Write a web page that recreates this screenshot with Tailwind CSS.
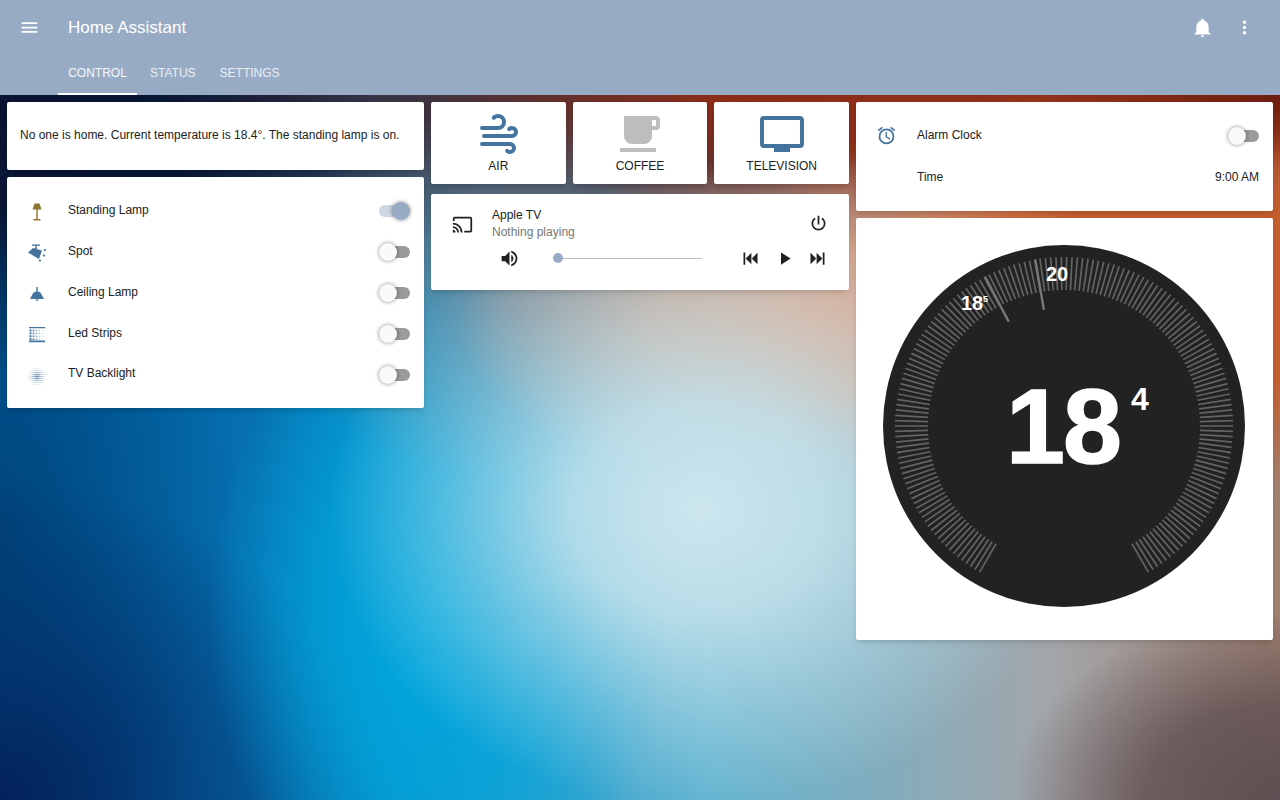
<!DOCTYPE html>
<html lang="en">
<head>
    <meta charset="UTF-8">
    <meta name="viewport" content="width=device-width, initial-scale=1.0">
    <title>Home Assistant</title>
    <script src="https://cdn.jsdelivr.net/npm/@tailwindcss/browser@4"></script>
</head>
<body class="h-[800px] overflow-hidden font-['Liberation_Sans',sans-serif] text-[#212121] text-[12px] bg-[#5b7f98] bg-[radial-gradient(ellipse_370px_300px_at_700px_510px,#cde6ee_0%,#c6e3ecdd_35%,#c0e0ea66_70%,#c0e0ea00_100%),radial-gradient(ellipse_350px_170px_at_810px_325px,#dfa98e_0%,#dfa98ecc_45%,#dfa98e00_100%),radial-gradient(ellipse_260px_70px_at_1280px_95px,#6c1d0f_0%,#6c1d0f00_100%),radial-gradient(ellipse_430px_210px_at_1150px_290px,#c75c2b_0%,#c75c2bee_50%,#c75c2b00_100%),radial-gradient(ellipse_620px_170px_at_1040px_70px,#8f2c15_0%,#8f2c15ee_55%,#8f2c1500_100%),radial-gradient(ellipse_270px_190px_at_1280px_800px,#5f4f52_0%,#5f4f52cc_50%,#5f4f5200_100%),radial-gradient(ellipse_260px_190px_at_520px_290px,#6d8fa3_0%,#6d8fa300_100%),radial-gradient(ellipse_440px_240px_at_600px_90px,#42303a_0%,#42303aee_40%,#42303a00_100%),radial-gradient(ellipse_620px_300px_at_0px_80px,#0a1230_0%,#0a1230ee_45%,#0a123000_100%),radial-gradient(ellipse_230px_340px_at_440px_610px,#00a8de_0%,#00a8dea0_55%,#00a8de00_100%),radial-gradient(ellipse_380px_320px_at_0px_800px,#04215a_0%,#04215a00_100%),radial-gradient(ellipse_240px_420px_at_0px_520px,#00457c_0%,#00457c00_100%),linear-gradient(90deg,#0064a4_0%,#0670b0_20%,#0a8fc8_32%,#5fb3d0_55%,#a3a6aa_82%,#a08070_100%)]">
    <!-- Toolbar -->
    <header class="h-[95px] bg-[#98abc5] text-white">
        <div class="h-[55px] flex items-center pl-[19px] pr-[25px]">
            <svg class="w-[21px] h-[21px] fill-white" viewBox="0 0 24 24"><path d="M3,6H21V8H3V6M3,11H21V13H3V11M3,16H21V18H3V16Z"/></svg>
            <div class="ml-[28px] text-[17px]">Home Assistant</div>
            <svg class="w-[21px] h-[21px] fill-white ml-auto" viewBox="0 0 24 24"><path d="M21,19V20H3V19L5,17V11C5,7.9 7.03,5.17 10,4.29C10,4.19 10,4.1 10,4A2,2 0 0,1 12,2A2,2 0 0,1 14,4C14,4.1 14,4.19 14,4.29C16.97,5.17 19,7.9 19,11V17L21,19M14,21A2,2 0 0,1 12,23A2,2 0 0,1 10,21"/></svg>
            <svg class="w-[21px] h-[21px] fill-white ml-[21px]" viewBox="0 0 24 24"><path d="M12,16A2,2 0 0,1 14,18A2,2 0 0,1 12,20A2,2 0 0,1 10,18A2,2 0 0,1 12,16M12,10A2,2 0 0,1 14,12A2,2 0 0,1 12,14A2,2 0 0,1 10,12A2,2 0 0,1 12,10M12,4A2,2 0 0,1 14,6A2,2 0 0,1 12,8A2,2 0 0,1 10,6A2,2 0 0,1 12,4Z"/></svg>
        </div>
        <nav class="h-[40px] flex pl-[58px] text-[12px]">
            <div class="w-[79px] flex items-center justify-center border-b-2 border-white pb-[2px] text-white/90">CONTROL</div>
            <div class="ml-[13px] flex items-center text-white/80 pb-[4px]">STATUS</div>
            <div class="ml-[24px] flex items-center text-white/80 pb-[4px]">SETTINGS</div>
        </nav>
    </header>

    <main class="flex gap-[7px] px-[7px] pt-[7px] items-start">
        <!-- Column 1 -->
        <section class="w-[417px] flex flex-col gap-[7px]">
            <div class="h-[68px] bg-white rounded-[2px] shadow-md flex items-center px-[13px] pb-[2px]">No one is home. Current temperature is 18.4°. The standing lamp is on.</div>
            <div class="bg-white rounded-[2px] shadow-md py-[13px] pl-[18px] pr-[14px]">
                <div class="h-[41px] flex items-center">
                    <svg class="w-6 h-6 mt-[3px] fill-[#8f7330]" viewBox="0 0 24 24"><path d="M9.5,3.5H14.5L16.5,9.5H7.5ZM11.3,9.5H12.7V19H11.3ZM8.5,19H15.5V20.6H8.5Z"/></svg>
                    <span class="ml-[19px] mb-[1px]">Standing Lamp</span>
                    <div class="ml-auto relative w-[31px] h-[12px] rounded-full bg-[#cdd6e3]"><div class="absolute right-0 -top-[3px] w-[18px] h-[18px] rounded-full bg-[#98abc5] shadow-[0_0_4px_#0007]"></div></div>
                </div>
                <div class="h-[41px] flex items-center">
                    <svg class="w-6 h-6 fill-[#44739e]" viewBox="0 0 24 24"><path d="M7,4.5H15V5.8H11.8V9H10.4V5.8H7ZM3,12.5L8,8L17,10.5L14,19ZM20,9a1,1 0 1,1 -0.1,0ZM19,14.5a1,1 0 1,1 -0.1,0ZM15,19.5a1,1 0 1,1 -0.1,0Z"/></svg>
                    <span class="ml-[19px] mb-[1px]">Spot</span>
                    <div class="ml-auto relative w-[31px] h-[12px] rounded-full bg-[#9b9b9b]"><div class="absolute left-0 -top-[3px] w-[18px] h-[18px] rounded-full bg-[#fafafa] shadow-[0_0_4px_#0007]"></div></div>
                </div>
                <div class="h-[41px] flex items-center">
                    <svg class="w-6 h-6 fill-[#44739e]" viewBox="0 0 24 24"><path d="M11.3,6H12.7V10.5C14.5,10.8 15.5,11.6 16.4,13L19,18H5L7.6,13C8.5,11.6 9.5,10.8 11.3,10.5ZM10,18.6H14L12,20.2Z"/></svg>
                    <span class="ml-[19px] mb-[1px]">Ceiling Lamp</span>
                    <div class="ml-auto relative w-[31px] h-[12px] rounded-full bg-[#9b9b9b]"><div class="absolute left-0 -top-[3px] w-[18px] h-[18px] rounded-full bg-[#fafafa] shadow-[0_0_4px_#0007]"></div></div>
                </div>
                <div class="h-[41px] flex items-center">
                    <svg class="w-6 h-6 fill-[#44739e]" viewBox="0 0 24 24">
                        <path d="M4,5H20V6.2H4ZM4,18.6H20V20.2H4Z"/>
                        <g id="led-dots"></g>
                    </svg>
                    <span class="ml-[19px] mb-[1px]">Led Strips</span>
                    <div class="ml-auto relative w-[31px] h-[12px] rounded-full bg-[#9b9b9b]"><div class="absolute left-0 -top-[3px] w-[18px] h-[18px] rounded-full bg-[#fafafa] shadow-[0_0_4px_#0007]"></div></div>
                </div>
                <div class="h-[41px] flex items-center">
                    <svg class="w-6 h-6 fill-[#44739e]" viewBox="0 0 24 24"><g id="tv-dots"></g></svg>
                    <span class="ml-[19px] mb-[3px]">TV Backlight</span>
                    <div class="ml-auto relative w-[31px] h-[12px] rounded-full bg-[#9b9b9b]"><div class="absolute left-0 -top-[3px] w-[18px] h-[18px] rounded-full bg-[#fafafa] shadow-[0_0_4px_#0007]"></div></div>
                </div>
            </div>
        </section>

        <!-- Column 2 -->
        <section class="w-[418px] flex flex-col gap-[10px]">
            <div class="flex gap-[7px]">
                <div class="flex-1 h-[82px] bg-white rounded-[2px] shadow-md flex flex-col items-center pt-[8px]">
                    <svg class="w-12 h-12 fill-[#44739e]" viewBox="0 0 24 24"><path d="M4,10A1,1 0 0,1 3,9A1,1 0 0,1 4,8H12A2,2 0 0,0 14,6A2,2 0 0,0 12,4C11.45,4 10.95,4.22 10.59,4.59C10.2,5 9.56,5 9.17,4.59C8.78,4.2 8.78,3.56 9.17,3.17C9.9,2.45 10.9,2 12,2A4,4 0 0,1 16,6A4,4 0 0,1 12,10H4M19,12A1,1 0 0,0 20,11A1,1 0 0,0 19,10C18.72,10 18.47,10.11 18.29,10.29C17.9,10.68 17.27,10.68 16.88,10.29C16.5,9.9 16.5,9.27 16.88,8.88C17.42,8.34 18.17,8 19,8A3,3 0 0,1 22,11A3,3 0 0,1 19,14H5A1,1 0 0,1 4,13A1,1 0 0,1 5,12H19M18,18H4A1,1 0 0,1 3,17A1,1 0 0,1 4,16H18A3,3 0 0,1 21,19A3,3 0 0,1 18,22C17.17,22 16.42,21.66 15.88,21.12C15.5,20.73 15.5,20.1 15.88,19.71C16.27,19.32 16.9,19.32 17.29,19.71C17.47,19.89 17.72,20 18,20A1,1 0 0,0 19,19A1,1 0 0,0 18,18Z"/></svg>
                    <div class="-mt-[1px]">AIR</div>
                </div>
                <div class="flex-1 h-[82px] bg-white rounded-[2px] shadow-md flex flex-col items-center pt-[8px]">
                    <svg class="w-12 h-12 fill-[#bdbdbd]" viewBox="0 0 24 24"><path d="M2,21H20V19H2M20,8H18V5H20M20,3H4V13A4,4 0 0,0 8,17H14A4,4 0 0,0 18,13V10H20A2,2 0 0,0 22,8V5C22,3.89 21.1,3 20,3Z"/></svg>
                    <div class="-mt-[1px]">COFFEE</div>
                </div>
                <div class="flex-1 h-[82px] bg-white rounded-[2px] shadow-md flex flex-col items-center pt-[8px]">
                    <svg class="w-12 h-12 fill-[#44739e]" viewBox="0 0 24 24"><path d="M21,17H3V5H21M21,3H3A2,2 0 0,0 1,5V17A2,2 0 0,0 3,19H8V21H16V19H21A2,2 0 0,0 23,17V5C23,3.89 22.1,3 21,3Z"/></svg>
                    <div class="-mt-[1px]">TELEVISION</div>
                </div>
            </div>
            <div class="h-[96px] bg-white rounded-[2px] shadow-md">
                <div class="flex pl-[21px] pr-[20px] pt-[13px]">
                    <svg class="w-[21px] h-[21px] mt-[7px] fill-[#212121]" viewBox="0 0 24 24"><path d="M1,10V12A9,9 0 0,1 10,21H12C12,14.92 7.07,10 1,10M1,14V16A5,5 0 0,1 6,21H8A7,7 0 0,0 1,14M1,18V21H4A3,3 0 0,0 1,18M21,3H3C1.89,3 1,3.89 1,5V8H3V5H21V19H14V21H21A2,2 0 0,0 23,19V5C23,3.89 22.1,3 21,3Z"/></svg>
                    <div class="ml-[19px] leading-[17px]">
                        <div>Apple TV</div>
                        <div class="text-[#757575]">Nothing playing</div>
                    </div>
                    <svg class="w-[21px] h-[21px] ml-auto mt-[6px] fill-[#212121]" viewBox="0 0 24 24"><path d="M16.56,5.44L15.11,6.89C16.84,7.94 18,9.83 18,12A6,6 0 0,1 12,18A6,6 0 0,1 6,12C6,9.83 7.16,7.94 8.88,6.88L7.44,5.44C5.36,6.88 4,9.28 4,12A8,8 0 0,0 12,20A8,8 0 0,0 20,12C20,9.28 18.64,6.88 16.56,5.44M13,3H11V13H13"/></svg>
                </div>
                <div class="flex items-center mt-[7px] pl-[68px]">
                    <svg class="w-[21px] h-[21px] fill-[#212121]" viewBox="0 0 24 24"><path d="M14,3.23V5.29C16.89,6.15 19,8.83 19,12C19,15.17 16.89,17.84 14,18.7V20.77C18,19.86 21,16.28 21,12C21,7.72 18,4.14 14,3.23M16.5,12C16.5,10.23 15.5,8.71 14,7.97V16C15.5,15.29 16.5,13.76 16.5,12M3,9V15H7L12,20V4L7,9H3Z"/></svg>
                    <div class="ml-[33px] w-[149px] relative h-px bg-[#bdbdbd]"><div class="absolute left-0 -top-[5px] w-[10px] h-[10px] rounded-full bg-[#98abc5]"></div></div>
                    <svg class="w-[21px] h-[21px] ml-[38px] fill-[#212121]" viewBox="0 0 24 24"><path d="M4,5H6V19H4ZM6.5,12L13,5.5V18.5ZM13.5,12L20,5.5V18.5Z"/></svg>
                    <svg class="w-[21px] h-[21px] ml-[13px] fill-[#212121]" viewBox="0 0 24 24"><path d="M8,5.14V19.14L19,12.14L8,5.14Z"/></svg>
                    <svg class="w-[21px] h-[21px] ml-[12px] fill-[#212121]" viewBox="0 0 24 24"><path d="M18,5H20V19H18ZM17.5,12L11,5.5V18.5ZM10.5,12L4,5.5V18.5Z"/></svg>
                </div>
            </div>
        </section>

        <!-- Column 3 -->
        <section class="w-[417px] flex flex-col gap-[7px]">
            <div class="h-[109px] bg-white rounded-[2px] shadow-md pt-[13px] pl-[20px] pr-[14px]">
                <div class="h-[41px] flex items-center">
                    <svg class="w-[21px] h-[21px] fill-[#44739e]" viewBox="0 0 24 24"><path d="M12,20A7,7 0 0,1 5,13A7,7 0 0,1 12,6A7,7 0 0,1 19,13A7,7 0 0,1 12,20M12,4A9,9 0 0,0 3,13A9,9 0 0,0 12,22A9,9 0 0,0 21,13A9,9 0 0,0 12,4M12.5,8H11V14L15.75,16.85L16.5,15.55L12.5,13.25V8M7.88,3.39L6.6,1.86L2,5.71L3.29,7.24L7.88,3.39M22,5.72L17.4,1.86L16.11,3.39L20.71,7.25L22,5.72Z"/></svg>
                    <span class="ml-[20px] mb-[1px]">Alarm Clock</span>
                    <div class="ml-auto relative w-[31px] h-[12px] rounded-full bg-[#9b9b9b]"><div class="absolute left-0 -top-[3px] w-[18px] h-[18px] rounded-full bg-[#fafafa] shadow-[0_0_4px_#0007]"></div></div>
                </div>
                <div class="h-[41px] flex items-center pl-[41px]">
                    <span>Time</span>
                    <span class="ml-auto">9:00 AM</span>
                </div>
            </div>
            <div class="h-[422px] bg-white rounded-[2px] shadow-md pt-[27px] pl-[27px]">
                <svg class="w-[362px] h-[362px]" viewBox="0 0 362 362">
                    <circle cx="181" cy="181" r="181" fill="#222222"/>
                    <g id="ticks"></g>
                    <g fill="#ffffff" font-family="'Liberation Sans',sans-serif" font-weight="700">
                        <text x="123" y="217.5" font-size="106" letter-spacing="-2" stroke="#ffffff" stroke-width="1.5">18</text>
                        <text x="248" y="165" font-size="32">4</text>
                        <text x="163" y="36" font-size="20">20</text>
                        <text x="78" y="65" font-size="20">18</text>
                        <text x="100" y="57" font-size="9">5</text>
                    </g>
                </svg>
            </div>
        </section>
    </main>

    <script>
        // Dial ticks, drawn over a 300 degree sweep
        const NS = 'http://www.w3.org/2000/svg';
        const ticks = document.getElementById('ticks');
        const count = 166;
        const highlighted = [-27.9, -9.8];
        function addTick(angle, r1, r2, color, width) {
            const a = angle * Math.PI / 180;
            const line = document.createElementNS(NS, 'line');
            line.setAttribute('x1', 181 + Math.sin(a) * r1);
            line.setAttribute('y1', 181 - Math.cos(a) * r1);
            line.setAttribute('x2', 181 + Math.sin(a) * r2);
            line.setAttribute('y2', 181 - Math.cos(a) * r2);
            line.setAttribute('stroke', color);
            line.setAttribute('stroke-width', width);
            ticks.appendChild(line);
        }
        for (let i = 0; i < count; i++) {
            addTick(-150 + i * 300 / (count - 1), 136, 169, '#646464', 1.7);
        }
        highlighted.forEach(angle => addTick(angle, 118, 169, '#777777', 2.4));

        function addDot(parent, x, y, size, opacity) {
            const dot = document.createElementNS(NS, 'rect');
            dot.setAttribute('x', x - size / 2);
            dot.setAttribute('y', y - size / 2);
            dot.setAttribute('width', size);
            dot.setAttribute('height', size);
            dot.setAttribute('opacity', opacity);
            parent.appendChild(dot);
        }
        const led = document.getElementById('led-dots');
        for (let row = 0; row < 4; row++) {
            for (let col = 0; col < 5; col++) {
                addDot(led, 5.5 + col * 3, 8.5 + row * 2.9, 2 - col * 0.25, 1 - col * 0.18);
            }
        }
        const tv = document.getElementById('tv-dots');
        for (let row = -4; row <= 4; row++) {
            for (let col = -4; col <= 4; col++) {
                const d = Math.hypot(row, col);
                if (d <= 4.5) addDot(tv, 12 + col * 2, 13.5 + row * 2, 1.6 - d * 0.2, 1 - d * 0.15);
            }
        }
    </script>
</body>
</html>
